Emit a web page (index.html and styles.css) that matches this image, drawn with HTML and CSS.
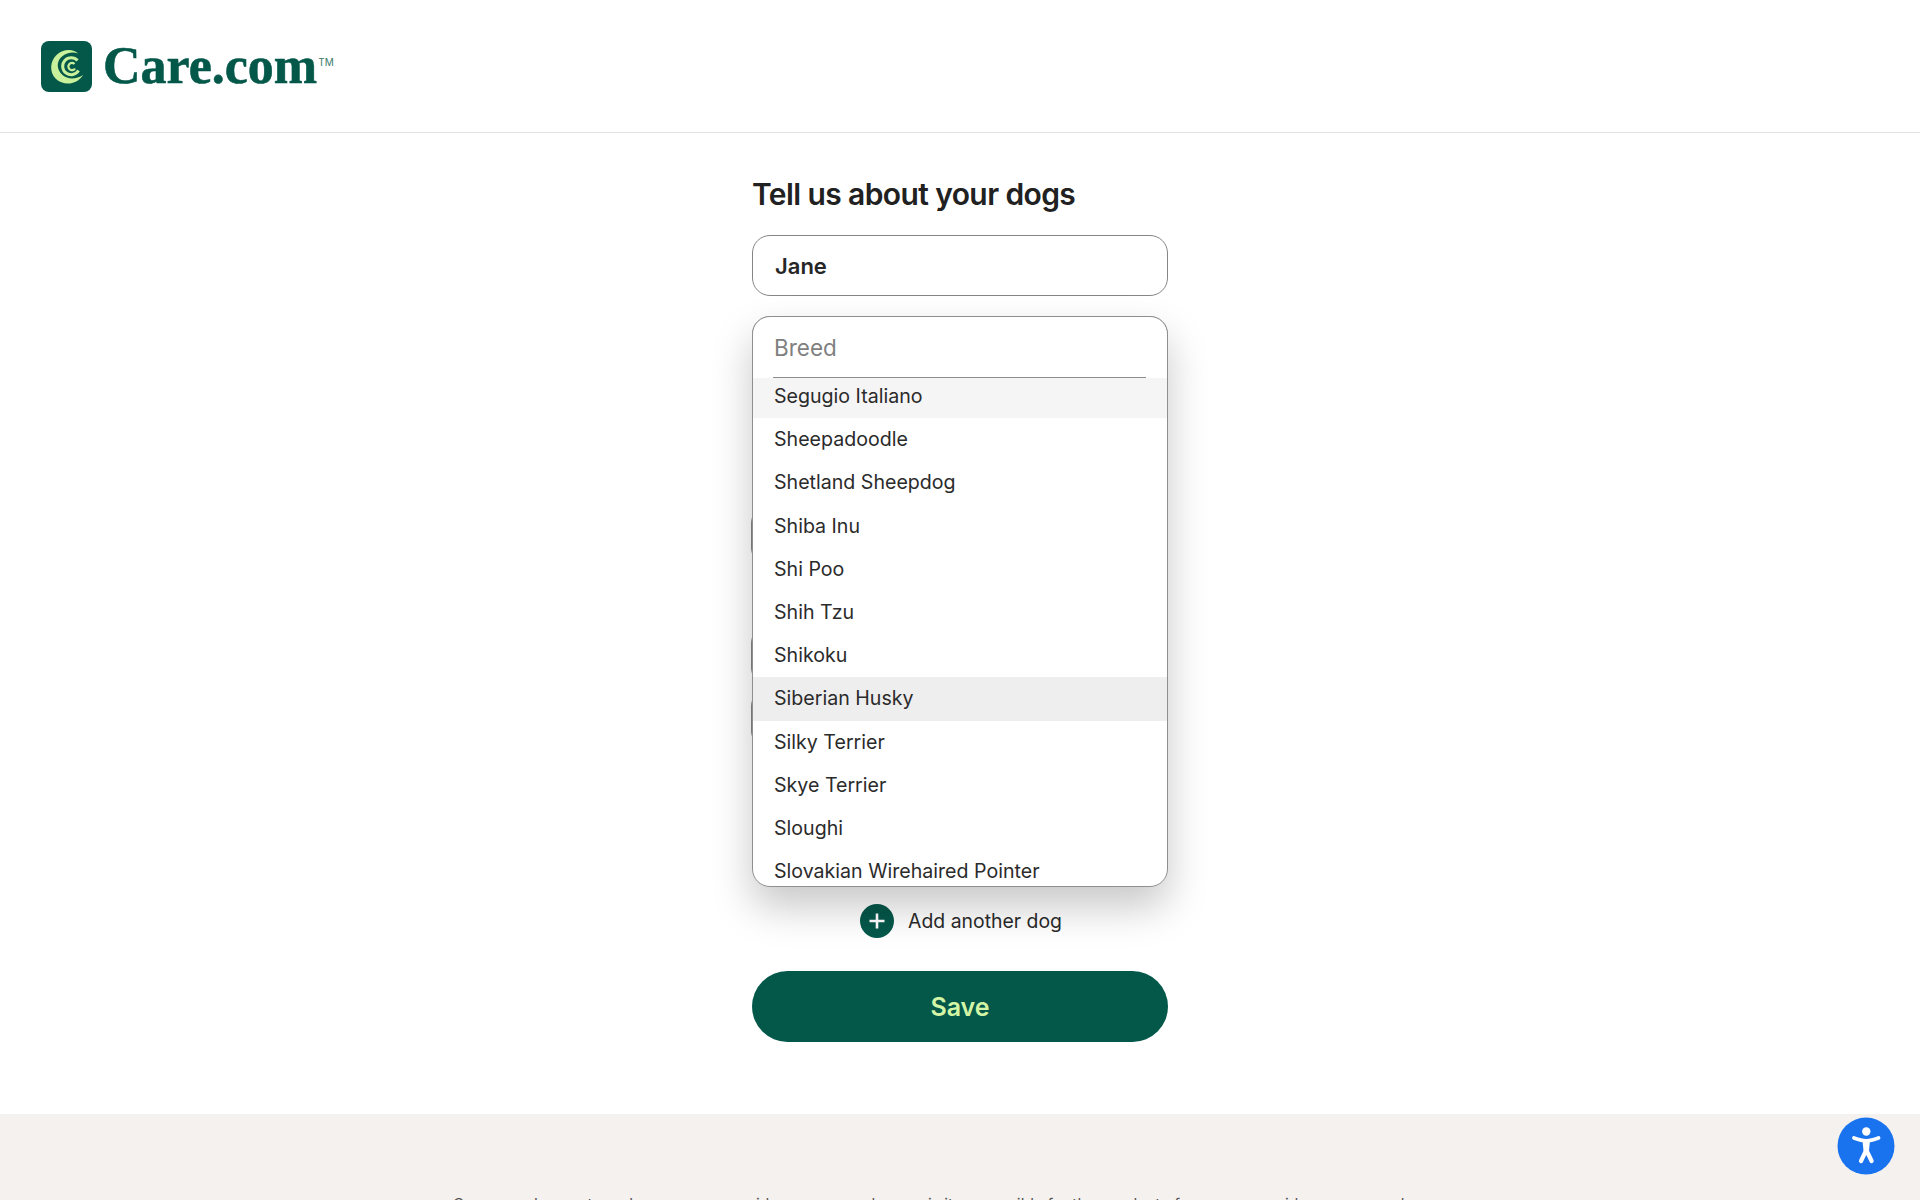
FILE: index.html
```html
<!DOCTYPE html>
<html lang="en">
<head>
    <meta charset="UTF-8">
    <meta name="viewport" content="width=device-width, initial-scale=1.0">
    <title>Tell us about your dogs</title>
    <link rel="stylesheet" href="styles.css">
</head>
<body>
    <header class="topBar">
        <a class="logo" href="#">
            <svg class="logoIcon" viewBox="0 0 51 51" width="51" height="51">
                <rect width="51" height="51" rx="8" fill="#04584a"/>
                <path d="M37 12.500C33 8 22 7.500 15.500 14C9 20.500 8 31 15 38C22.500 45 36 44 42 34C36 38 27 39 21.500 34C15 28 15.500 20 21 15.500C25.500 11.800 32 10.500 37 12.500Z" fill="#c9f09a"/>
                <path d="M36.500 19.500A8.500 8.500 0 1 0 37.500 29.500" stroke="#c9f09a" stroke-width="3" fill="none"/>
                <path d="M33.500 23A3.600 3.600 0 1 0 34 27.500" stroke="#c9f09a" stroke-width="2.200" fill="none"/>
            </svg>
            <span class="logoText">Care.com</span><span class="logoTm">TM</span>
        </a>
    </header>

    <main class="formArea">
        <h1 class="titulo">Tell us about your dogs</h1>

        <div class="campo campoNome">Jane</div>

        <div class="breedArea">
            <div class="campo"></div>
            <div class="campo campoAtras campoAtras1"></div>
            <div class="campo campoAtras campoAtras2"></div>
            <div class="campo campoAtras campoAtras3"></div>

            <!-- dropdown aberto por cima dos outros campos -->
            <div class="dropdown">
                <div class="buscaBreed"><span>Breed</span></div>
                <ul class="listaBreed">
                    <li class="itemAtivo">Segugio Italiano</li>
                    <li>Sheepadoodle</li>
                    <li>Shetland Sheepdog</li>
                    <li>Shiba Inu</li>
                    <li>Shi Poo</li>
                    <li>Shih Tzu</li>
                    <li>Shikoku</li>
                    <li class="itemHover">Siberian Husky</li>
                    <li>Silky Terrier</li>
                    <li>Skye Terrier</li>
                    <li>Sloughi</li>
                    <li>Slovakian Wirehaired Pointer</li>
                </ul>
            </div>
        </div>

        <a class="addDog" href="#">
            <svg class="addIcon" viewBox="0 0 34 34" width="34" height="34">
                <circle cx="17" cy="17" r="17" fill="#04584a"/>
                <path d="M17 9.500V24.500M9.500 17H24.500" stroke="#fff" stroke-width="2.600"/>
            </svg>
            <span>Add another dog</span>
        </a>

        <button class="saveBtn">Save</button>
    </main>

    <footer class="rodape">
        <p>Care.com does not employ any care provider or care seeker nor is it responsible for the conduct of any care provider or care seeker.</p>
    </footer>

    <button class="a11yBtn" aria-label="Accessibility">
        <svg viewBox="0 0 58 58" width="58" height="58">
            <circle cx="29" cy="29" r="28.500" fill="#1a73ee"/>
            <circle cx="29.300" cy="14.500" r="4.200" fill="#fff"/>
            <path d="M17 21C22 22.800 25.500 23.800 29.300 23.800C33 23.800 36.500 22.800 41.500 21" stroke="#fff" stroke-width="3.800" stroke-linecap="round" fill="none"/>
            <path d="M29.300 33L24 44M29.300 33L34.600 44" stroke="#fff" stroke-width="4.200" stroke-linecap="round" fill="none"/>
            <path d="M25.500 23H33L32 34H26.500Z" fill="#fff"/>
        </svg>
    </button>
</body>
</html>
```

FILE: styles.css
```css
* {
    margin: 0;
    padding: 0;
    box-sizing: border-box;
}
html, body {
    height: 1200px;
    overflow: hidden;
}
body {
    position: relative;
    background-color: #fff;
    color: #262626;
    font-family: Inter, "Liberation Sans", sans-serif;
    display: flex;
    flex-direction: column;
}

/* Topo */
.topBar {
    height: 133px;
    border-bottom: 1px solid #e2e2e2;
    padding: 41px 0 0 41px;
}
.logo {
    display: flex;
    align-items: flex-start;
    text-decoration: none;
    color: #04584a;
}
.logoIcon {
    flex: none;
}
.logoText {
    margin-left: 11px;
    font-family: "Liberation Serif", serif;
    font-weight: 700;
    font-size: 52px;
    line-height: 50px;
    -webkit-text-stroke: 0.6px #04584a;
}
.logoTm {
    margin: 16px 0 0 1px;
    font-size: 10px;
    line-height: 10px;
    color: #3f7a6c;
}

/* Formulario */
.formArea {
    width: 416px;
    margin: 0 auto;
    flex: none;
    display: flex;
    flex-direction: column;
}
.titulo {
    margin-top: 43px;
    font-size: 30px;
    line-height: 36px;
    font-weight: 600;
    letter-spacing: -0.6px;
    color: #212121;
}
.campo {
    height: 61px;
    border: 1px solid #858585;
    border-radius: 18px;
    background-color: #fff;
}
.campoNome {
    margin-top: 23px;
    padding-left: 22px;
    font-size: 22px;
    line-height: 60px;
    font-weight: 600;
}
.breedArea {
    position: relative;
    margin-top: 20px;
    height: 571px;
}
.campoAtras {
    margin-left: -1px;
}
.campoAtras1 {
    margin-top: 128px;
}
.campoAtras2 {
    margin-top: 59px;
}
.campoAtras3 {
    margin-top: 2px;
}

.dropdown {
    position: absolute;
    top: 0;
    left: 0;
    width: 416px;
    height: 571px;
    background-color: #fff;
    border: 1px solid #8f8f8f;
    border-radius: 18px;
    overflow: hidden;
    box-shadow: 0 20px 40px rgba(0, 0, 0, 0.22);
}
.buscaBreed {
    height: 61px;
    margin: 0 21px 0 20px;
    border-bottom: 1px solid #8c8c8c;
    font-size: 22.500px;
    line-height: 61px;
    color: #7f7f7f;
}
.buscaBreed span {
    margin-left: 1px;
}
.listaBreed {
    list-style: none;
}
.listaBreed li {
    height: 43.200px;
    padding-left: 21px;
    font-size: 19.600px;
    line-height: 43px;
    color: #2b2b2b;
}
/* primeiro item esta meio rolado, cortado em cima */
.listaBreed .itemAtivo {
    height: 40.200px;
    line-height: 37px;
    background-color: #f5f5f5;
}
.listaBreed .itemHover {
    background-color: #eee;
}

.addDog {
    margin-top: 17px;
    padding-left: 2px;
    display: flex;
    align-items: center;
    justify-content: center;
    gap: 14px;
    height: 34px;
    font-size: 19.400px;
    color: #2b2b2b;
    text-decoration: none;
}
.addIcon {
    flex: none;
}
.saveBtn {
    margin-top: 33px;
    height: 71px;
    border: 0;
    border-radius: 36px;
    background-color: #04584a;
    color: #d3f5a5;
    font-family: inherit;
    font-size: 25px;
    font-weight: 600;
}

/* Rodape */
.rodape {
    position: absolute;
    top: 1114px;
    left: 0;
    right: 0;
    height: 86px;
    overflow: hidden;
    padding: 81px 40px 0 0;
    background-color: #f5f1ee;
    text-align: center;
    font-size: 15.600px;
    line-height: 20px;
    color: #555;
}

.a11yBtn {
    position: absolute;
    left: 1837px;
    top: 1117px;
    width: 58px;
    height: 58px;
    border: 0;
    background: none;
}
```
